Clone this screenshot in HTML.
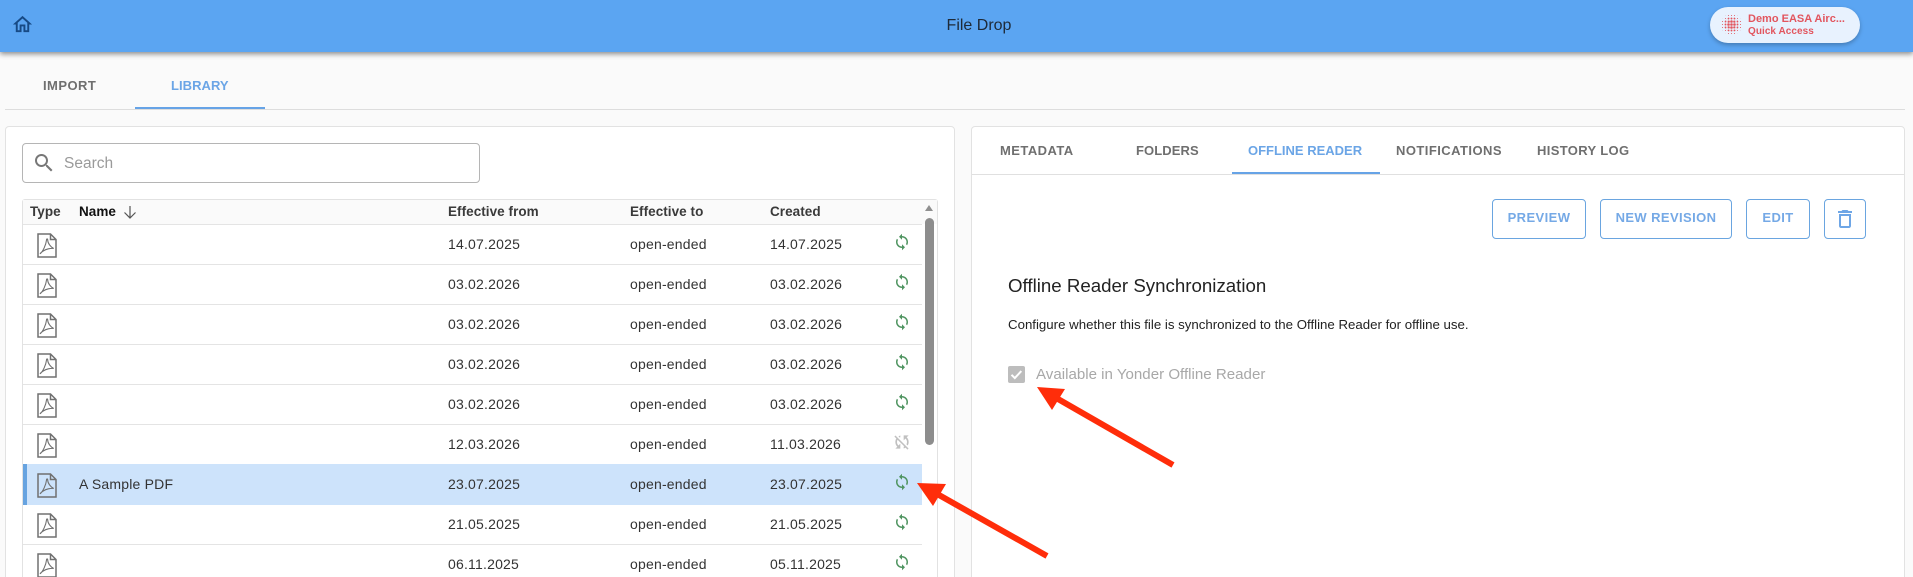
<!DOCTYPE html>
<html><head><meta charset="utf-8"><title>File Drop</title>
<style>
html,body{margin:0;padding:0;width:1913px;height:577px;overflow:hidden;background:#fafafa;font-family:"Liberation Sans",Arial,sans-serif;color:#212121}
#w{position:relative;width:1913px;height:577px;overflow:hidden;background:#fafafa}
.a{position:absolute;white-space:nowrap}
.hdr{left:0;top:0;width:1913px;height:52px;background:#5ba5f2;box-shadow:0 2px 5px rgba(0,0,0,.45)}
.tab{font-size:13px;font-weight:700;letter-spacing:.45px;color:#6f6f6f;line-height:16px}
.blue{color:#6ba5e6}
.card{background:#fff;border:1px solid #e2e2e2;border-radius:4px;box-sizing:border-box}
.th{font-size:13.5px;font-weight:700;line-height:16px;color:#3a3a3a;letter-spacing:.05px;top:204px}
.td{font-size:14px;line-height:16px;color:#333;letter-spacing:.2px}
.ln{height:1px;background:#e4e4e4;left:23px;width:899px}
.btn{box-sizing:border-box;border:1.3px solid #6aa5e0;border-radius:4px;top:199px;height:40px;text-align:center;line-height:36px;font-size:13px;font-weight:700;letter-spacing:.4px;color:#75a9e6}
</style></head><body><div id="w">
<svg width="0" height="0" style="position:absolute"><defs>
<symbol id="sync" viewBox="0 0 24 24"><path fill="#4f9460" d="M12 4V1L8 5l4 4V6c3.310 0 6 2.690 6 6 0 1.010-.25 1.970-.7 2.800l1.460 1.460C19.540 15.030 20 13.570 20 12c0-4.420-3.580-8-8-8zm0 14c-3.310 0-6-2.690-6-6 0-1.010.25-1.970.7-2.800L5.240 7.740C4.460 8.970 4 10.430 4 12c0 4.420 3.580 8 8 8v3l4-4-4-4v3z"/></symbol>
<symbol id="pdf" viewBox="0 0 20 25"><path fill="none" stroke="#707070" stroke-width="1.500" d="M1 1h12.500L19 6.500V24H1zM13.500 1v5.500H19"/><path fill="none" stroke="#707070" stroke-width="1.100" d="M3.500 20.500C6 18 9 12 9.500 7c.1-1.500 1.200-1.500 1.200 0 0 3 2.800 7 6 8.500-3-.5-7.500.5-10.500 2.500-2 1.300-3.500 3-2.700 2.500z"/></symbol>
<pattern id="d1" width="3" height="3" patternUnits="userSpaceOnUse"><circle cx="1.500" cy="1.500" r=".55" fill="#e2555e"/></pattern>
<pattern id="d2" width="3" height="3" patternUnits="userSpaceOnUse"><circle cx="1.500" cy="1.500" r=".95" fill="#e2555e"/></pattern>
<pattern id="d3" width="3" height="3" patternUnits="userSpaceOnUse"><circle cx="1.500" cy="1.500" r="1.300" fill="#e2555e"/></pattern>
</defs></svg>

<div class="a hdr"></div>
<svg class="a" style="left:11.400px;top:13px" width="23" height="23" viewBox="0 0 24 24"><path fill="#174a85" d="M12 5.690l5 4.500V18h-2v-6H9v6H7v-7.810l5-4.500M12 3L2 12h3v8h6v-6h2v6h6v-8h3L12 3z"/></svg>
<div class="a" style="left:879px;width:200px;top:17px;text-align:center;font-size:16px;line-height:18px;color:#1e2a38">File Drop</div>
<div class="a" style="left:1710px;top:7px;width:150px;height:36px;border-radius:18px;background:#e8f2fe;box-shadow:0 2px 4px rgba(0,0,0,.25)"></div>
<svg class="a" style="left:1721px;top:14px" width="21" height="21"><circle cx="10.500" cy="10.500" r="10.500" fill="url(#d1)"/><circle cx="10.500" cy="10.500" r="7.500" fill="url(#d2)"/><circle cx="10.500" cy="10.500" r="4.500" fill="url(#d3)"/></svg>
<div class="a" style="left:1748px;top:12px;font-size:11px;font-weight:700;line-height:14px;color:#e2555e">Demo EASA Airc...</div>
<div class="a" style="left:1748px;top:25px;font-size:10px;font-weight:700;line-height:14px;color:#e2555e;letter-spacing:.05px">Quick Access</div>

<div class="a tab" style="left:43px;top:78px">IMPORT</div>
<div class="a tab blue" style="left:171px;top:78px;letter-spacing:.05px">LIBRARY</div>
<div class="a" style="left:5px;top:109px;width:1900px;height:1px;background:#ddd"></div>
<div class="a" style="left:135px;top:107px;width:130px;height:2px;background:#66a3e6"></div>

<!-- left card -->
<div class="a card" style="left:5px;top:126px;width:950px;height:470px"></div>
<div class="a" style="left:22px;top:143px;width:458px;height:40px;box-sizing:border-box;border:1px solid #b5b5b5;border-radius:4px;background:#fff"></div>
<svg class="a" style="left:32px;top:151px" width="24" height="24" viewBox="0 0 24 24"><path fill="#777" d="M15.500 14h-.79l-.28-.27C15.410 12.590 16 11.110 16 9.500 16 5.910 13.090 3 9.500 3S3 5.910 3 9.500 5.910 16 9.500 16c1.610 0 3.090-.59 4.230-1.570l.27.28v.79l5 4.990L20.490 19l-4.990-5zm-6 0C7.010 14 5 11.990 5 9.500S7.010 5 9.500 5 14 7.010 14 9.500 11.990 14 9.500 14z"/></svg>
<div class="a" style="left:64px;top:155px;font-size:15.500px;line-height:18px;color:#9a9a9a">Search</div>

<div class="a" style="left:22px;top:199px;width:916px;height:400px;box-sizing:border-box;border:1px solid #e2e2e2;border-radius:3px 3px 0 0"></div>
<div class="a" style="left:23px;top:200px;width:914px;height:24px;background:#fafafa"></div>
<div class="a th" style="left:30px">Type</div>
<div class="a th" style="left:79px;color:#111">Name</div>
<svg class="a" style="left:121px;top:203px" width="18" height="18" viewBox="0 0 18 18"><path fill="none" stroke="#555" stroke-width="1.200" d="M9 3v12M3.500 9.500L9 15l5.500-5.500"/></svg>
<div class="a th" style="left:448px">Effective from</div>
<div class="a th" style="left:630px">Effective to</div>
<div class="a th" style="left:770px">Created</div>

<div class="a" style="left:23px;top:464px;width:899px;height:41px;background:#cde3fb"></div>
<div class="a" style="left:23px;top:464px;width:4px;height:41px;background:#66a3e0"></div>

<div class="a ln" style="top:224px"></div><div class="a ln" style="top:264px"></div><div class="a ln" style="top:304px"></div><div class="a ln" style="top:344px"></div><div class="a ln" style="top:384px"></div><div class="a ln" style="top:424px"></div><div class="a ln" style="top:544px"></div>

<svg class="a" style="left:37px;top:233px" width="20" height="25"><use href="#pdf"/></svg>
<svg class="a" style="left:37px;top:273px" width="20" height="25"><use href="#pdf"/></svg>
<svg class="a" style="left:37px;top:313px" width="20" height="25"><use href="#pdf"/></svg>
<svg class="a" style="left:37px;top:353px" width="20" height="25"><use href="#pdf"/></svg>
<svg class="a" style="left:37px;top:393px" width="20" height="25"><use href="#pdf"/></svg>
<svg class="a" style="left:37px;top:433px" width="20" height="25"><use href="#pdf"/></svg>
<svg class="a" style="left:37px;top:473px" width="20" height="25"><use href="#pdf"/></svg>
<svg class="a" style="left:37px;top:513px" width="20" height="25"><use href="#pdf"/></svg>
<svg class="a" style="left:37px;top:553px" width="20" height="25"><use href="#pdf"/></svg>

<div class="a td" style="left:79px;top:476px">A Sample PDF</div>

<div class="a td" style="left:448px;top:236px">14.07.2025</div><div class="a td" style="left:630px;top:236px">open-ended</div><div class="a td" style="left:770px;top:236px">14.07.2025</div>
<div class="a td" style="left:448px;top:276px">03.02.2026</div><div class="a td" style="left:630px;top:276px">open-ended</div><div class="a td" style="left:770px;top:276px">03.02.2026</div>
<div class="a td" style="left:448px;top:316px">03.02.2026</div><div class="a td" style="left:630px;top:316px">open-ended</div><div class="a td" style="left:770px;top:316px">03.02.2026</div>
<div class="a td" style="left:448px;top:356px">03.02.2026</div><div class="a td" style="left:630px;top:356px">open-ended</div><div class="a td" style="left:770px;top:356px">03.02.2026</div>
<div class="a td" style="left:448px;top:396px">03.02.2026</div><div class="a td" style="left:630px;top:396px">open-ended</div><div class="a td" style="left:770px;top:396px">03.02.2026</div>
<div class="a td" style="left:448px;top:436px">12.03.2026</div><div class="a td" style="left:630px;top:436px">open-ended</div><div class="a td" style="left:770px;top:436px">11.03.2026</div>
<div class="a td" style="left:448px;top:476px">23.07.2025</div><div class="a td" style="left:630px;top:476px">open-ended</div><div class="a td" style="left:770px;top:476px">23.07.2025</div>
<div class="a td" style="left:448px;top:516px">21.05.2025</div><div class="a td" style="left:630px;top:516px">open-ended</div><div class="a td" style="left:770px;top:516px">21.05.2025</div>
<div class="a td" style="left:448px;top:556px">06.11.2025</div><div class="a td" style="left:630px;top:556px">open-ended</div><div class="a td" style="left:770px;top:556px">05.11.2025</div>

<svg class="a" style="left:893px;top:233px" width="18" height="18"><use href="#sync"/></svg>
<svg class="a" style="left:893px;top:273px" width="18" height="18"><use href="#sync"/></svg>
<svg class="a" style="left:893px;top:313px" width="18" height="18"><use href="#sync"/></svg>
<svg class="a" style="left:893px;top:353px" width="18" height="18"><use href="#sync"/></svg>
<svg class="a" style="left:893px;top:393px" width="18" height="18"><use href="#sync"/></svg>
<svg class="a" style="left:892px;top:432px" width="20" height="20" viewBox="0 0 24 24"><path fill="#c0c0c0" d="M10 6.350V4.260c-.8.210-1.550.54-2.230.96l1.460 1.460c.25-.12.500-.24.770-.33zm-7.140-.94l2.360 2.360C4.450 9 4 10.450 4 12c0 2.210.91 4.200 2.360 5.640L4 20h6v-6l-2.240 2.240C6.680 15.150 6 13.660 6 12c0-1 .25-1.940.68-2.770l8.080 8.080c-.25.130-.5.250-.76.340v2.090c.8-.210 1.550-.540 2.230-.96l2.360 2.360 1.270-1.270L4.140 4.140 2.860 5.410zM20 4h-6v6l2.240-2.240C17.320 8.850 18 10.340 18 12c0 1-.25 1.940-.68 2.770l1.460 1.460C19.550 15 20 13.550 20 12c0-2.210-.91-4.200-2.360-5.640L20 4z"/></svg>
<svg class="a" style="left:893px;top:473px" width="18" height="18"><use href="#sync"/></svg>
<svg class="a" style="left:893px;top:513px" width="18" height="18"><use href="#sync"/></svg>
<svg class="a" style="left:893px;top:553px" width="18" height="18"><use href="#sync"/></svg>

<!-- scrollbar -->
<div class="a" style="left:925px;top:205px;width:0;height:0;border-left:4.500px solid transparent;border-right:4.500px solid transparent;border-bottom:6px solid #8f8f8f"></div>
<div class="a" style="left:925px;top:218px;width:9px;height:227px;border-radius:4.500px;background:#8d8d8d"></div>

<!-- right card -->
<div class="a card" style="left:971px;top:126px;width:934px;height:470px"></div>
<div class="a" style="left:972px;top:174px;width:932px;height:1px;background:#e0e0e0"></div>
<div class="a tab" style="left:1000px;top:143px">METADATA</div>
<div class="a tab" style="left:1136px;top:143px;letter-spacing:.1px">FOLDERS</div>
<div class="a tab blue" style="left:1248px;top:143px;letter-spacing:0">OFFLINE READER</div>
<div class="a tab" style="left:1396px;top:143px">NOTIFICATIONS</div>
<div class="a tab" style="left:1537px;top:143px;letter-spacing:.35px">HISTORY LOG</div>
<div class="a" style="left:1232px;top:172px;width:148px;height:2px;background:#66a3e6"></div>

<div class="a btn" style="left:1492px;width:94px">PREVIEW</div>
<div class="a btn" style="left:1600px;width:132px">NEW REVISION</div>
<div class="a btn" style="left:1746px;width:64px">EDIT</div>
<div class="a btn" style="left:1824px;width:42px"></div>
<svg class="a" style="left:1833px;top:207px" width="24" height="24" viewBox="0 0 24 24"><path fill="#6ea6e6" d="M6 19c0 1.100.9 2 2 2h8c1.100 0 2-.9 2-2V7H6v12zM8 9h8v10H8V9zm7.500-5l-1-1h-5l-1 1H5v2h14V4z"/></svg>

<div class="a" style="left:1008px;top:275px;font-size:18.700px;line-height:22px;color:#222">Offline Reader Synchronization</div>
<div class="a" style="left:1008px;top:317px;font-size:13.250px;line-height:16px;color:#222">Configure whether this file is synchronized to the Offline Reader for offline use.</div>
<div class="a" style="left:1008px;top:366px;width:17px;height:17px;border-radius:2px;background:#bdbdbd"></div>
<svg class="a" style="left:1008px;top:366px" width="17" height="17"><path d="M3.500 8.800l3.300 3.300 6.500-7" fill="none" stroke="#fff" stroke-width="2"/></svg>
<div class="a" style="left:1036px;top:366px;font-size:15.100px;line-height:18px;color:#a8a8a8">Available in Yonder Offline Reader</div>

<!-- arrows -->
<svg class="a" style="left:0;top:0" width="1913" height="577">
<path d="M1173 465L1058 399" stroke="#ff2d0a" stroke-width="6" fill="none"/>
<path d="M1037 387L1065 389L1052 410Z" fill="#ff2d0a"/>
<path d="M1047 556L939 495" stroke="#ff2d0a" stroke-width="6" fill="none"/>
<path d="M917 483L946 484L933 506Z" fill="#ff2d0a"/>
</svg>
</div></body></html>
